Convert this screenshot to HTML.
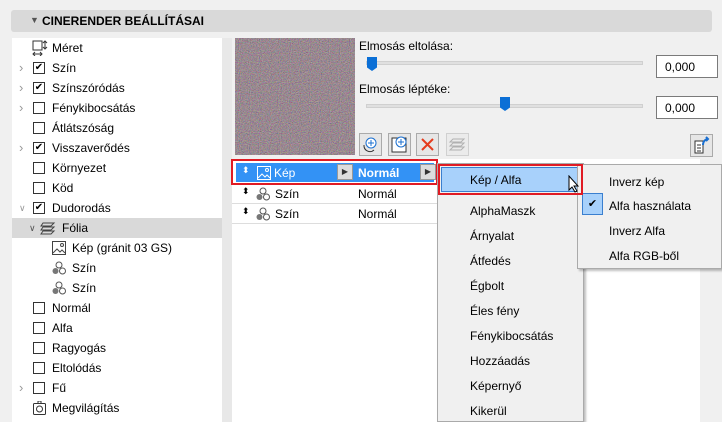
<!DOCTYPE html>
<html><head><meta charset="utf-8"><style>
*{margin:0;padding:0;box-sizing:border-box}
body{width:722px;height:422px;overflow:hidden;background:#f0f0f0;font-family:"Liberation Sans",sans-serif;font-size:12px;color:#000;position:relative}
.a{position:absolute}
.hdr{left:11px;top:10px;width:701px;height:22px;background:#d9d9d9;border-radius:3px}
.hdr span{position:absolute;left:20px;top:4px;font-weight:bold;font-size:12px}
.tree{left:12px;top:38px;width:210px;height:384px;background:#fff}
.row{position:absolute;left:0;width:210px;height:20px;line-height:20px}
.row .t{position:absolute;left:40px}
.cb{position:absolute;left:21px;top:4px;width:12px;height:12px;border:1px solid #333;background:#fff;font-size:10px;line-height:10px;text-align:center}
.ch{position:absolute;left:7px;color:#999;font-size:13px}
.menu{left:437px;top:163px;width:147px;height:259px;background:#f0f0f0;border:1px solid #aaa;box-shadow:2px 2px 2px rgba(0,0,0,.25)}
.mi{position:absolute;left:32px}
.sub{left:577px;top:164px;width:145px;height:105px;background:#f0f0f0;border:1px solid #aaa;box-shadow:2px 2px 2px rgba(0,0,0,.25)}
.btn{position:absolute;top:133px;width:23px;height:23px;border:1px solid #aaa;background:#e6e6e6}
.inp{position:absolute;left:656px;width:62px;height:23px;background:#fff;border:1px solid #7a7a7a;padding:4px 0 0 8px}
.track{position:absolute;left:366px;width:277px;height:4px;background:#e0e0e0;border:1px solid #d0d0d0}
.thumb{position:absolute;width:10px;height:14px;background:#0b6fd6;clip-path:polygon(0 0,100% 0,100% 75%,50% 100%,0 75%)}
</style></head><body>
<div class="a hdr"><span style="left:19px;top:5px;font-size:9px;color:#555">▼</span><span style="left:31px">CINERENDER BEÁLLÍTÁSAI</span></div>
<div class="a tree">
 <div class="row" style="top:0"><svg class="a" style="left:20px;top:2px" width="16" height="16"><rect x="1" y="1" width="9" height="9" fill="none" stroke="#333"/><path d="M13 1v8M11 3l2-2 2 2M11 7l2 2 2-2M1 14h9M3 12l-2 2 2 2M8 12l2 2-2 2" stroke="#333" fill="none"/></svg><span class="t">Méret</span></div>
 <div class="row" style="top:20px"><span class="ch">›</span><div class="cb">✔</div><span class="t">Szín</span></div>
 <div class="row" style="top:40px"><span class="ch">›</span><div class="cb">✔</div><span class="t">Színszóródás</span></div>
 <div class="row" style="top:60px"><span class="ch">›</span><div class="cb"></div><span class="t">Fénykibocsátás</span></div>
 <div class="row" style="top:80px"><div class="cb"></div><span class="t">Átlátszóság</span></div>
 <div class="row" style="top:100px"><span class="ch">›</span><div class="cb">✔</div><span class="t">Visszaverődés</span></div>
 <div class="row" style="top:120px"><div class="cb"></div><span class="t">Környezet</span></div>
 <div class="row" style="top:140px"><div class="cb"></div><span class="t">Köd</span></div>
 <div class="row" style="top:160px"><span class="ch" style="font-size:9px">∨</span><div class="cb">✔</div><span class="t">Dudorodás</span></div>
 <div class="row" style="top:180px;background:#d9d9d9"><span class="ch" style="left:17px;color:#555;font-size:9px">∨</span><svg class="a" style="left:28px;top:3px" width="16" height="14"><path d="M3 2h11l-3 3H1zM3 6h11l-3 3H1zM3 10h11l-3 3H1z" fill="none" stroke="#444"/></svg><span class="t" style="left:50px">Fólia</span></div>
 <div class="row" style="top:200px"><svg class="a" style="left:40px;top:3px" width="14" height="14"><rect x="0.5" y="0.5" width="13" height="13" fill="#fff" stroke="#444"/><path d="M1 12l4-4 3 3 2-2 3 3" fill="none" stroke="#444"/><circle cx="10" cy="4" r="1.5" fill="none" stroke="#444"/></svg><span class="t" style="left:60px">Kép (gránit 03 GS)</span></div>
 <div class="row" style="top:220px"><svg class="a" style="left:40px;top:3px" width="14" height="14"><circle cx="7" cy="4" r="3" fill="none" stroke="#555"/><circle cx="3.5" cy="10" r="3" fill="#777"/><circle cx="10.5" cy="10" r="3" fill="none" stroke="#555"/></svg><span class="t" style="left:60px">Szín</span></div>
 <div class="row" style="top:240px"><svg class="a" style="left:40px;top:3px" width="14" height="14"><circle cx="7" cy="4" r="3" fill="none" stroke="#555"/><circle cx="3.5" cy="10" r="3" fill="#777"/><circle cx="10.5" cy="10" r="3" fill="none" stroke="#555"/></svg><span class="t" style="left:60px">Szín</span></div>
 <div class="row" style="top:260px"><div class="cb"></div><span class="t">Normál</span></div>
 <div class="row" style="top:280px"><div class="cb"></div><span class="t">Alfa</span></div>
 <div class="row" style="top:300px"><div class="cb"></div><span class="t">Ragyogás</span></div>
 <div class="row" style="top:320px"><div class="cb"></div><span class="t">Eltolódás</span></div>
 <div class="row" style="top:340px"><span class="ch">›</span><div class="cb"></div><span class="t">Fű</span></div>
 <div class="row" style="top:360px"><svg class="a" style="left:21px;top:3px" width="13" height="14"><rect x="0.5" y="2.5" width="12" height="11" rx="1" fill="none" stroke="#333"/><circle cx="6.5" cy="8" r="3" fill="none" stroke="#333"/><path d="M5 2V0h3v2" stroke="#333" fill="none"/></svg><span class="t">Megvilágítás</span></div>
</div>
<div class="a" style="left:222px;top:38px;width:10px;height:384px;background:#e8e8e8"></div>
<svg class="a" style="left:235px;top:38px" width="120" height="117"><filter id="g"><feTurbulence type="fractalNoise" baseFrequency="0.9" numOctaves="2" seed="3"/><feColorMatrix values="0.9 0 0 0 -0.05  0 0.75 0 0 -0.05  0 0 0.75 0 0  0 0 0 0 1"/></filter><rect width="120" height="117" fill="#6a5656"/><rect width="120" height="117" filter="url(#g)" opacity="0.75"/></svg>
<div class="a" style="left:359px;top:39px">Elmosás eltolása:</div>
<div class="track" style="top:61px"></div><div class="thumb" style="left:367px;top:57px"></div>
<div class="inp" style="top:55px">0,000</div>
<div class="a" style="left:359px;top:82px">Elmosás léptéke:</div>
<div class="track" style="top:104px"></div><div class="thumb" style="left:500px;top:97px"></div>
<div class="inp" style="top:96px">0,000</div>
<div class="btn" style="left:359px"><svg width="21" height="21"><circle cx="11" cy="9" r="5" fill="#fff" stroke="#1a6fd0"/><path d="M11 6v6M8 9h6" stroke="#1a6fd0"/><path d="M4 11a6 6 0 0 0 10 5" stroke="#333" fill="none"/></svg></div>
<div class="btn" style="left:388px"><svg width="21" height="21"><rect x="3" y="4" width="14" height="14" fill="#fff" stroke="#333"/><circle cx="12" cy="8" r="5" fill="#fff" stroke="#1a6fd0"/><path d="M12 5v6M9 8h6" stroke="#1a6fd0"/></svg></div>
<div class="btn" style="left:416px"><svg width="21" height="21"><path d="M5 5l11 11M16 5L5 16" stroke="#e53b1c" stroke-width="2"/></svg></div>
<div class="btn" style="left:446px;opacity:.45"><svg width="21" height="21"><path d="M6 5h11l-3 3H3zM6 9h11l-3 3H3zM6 13h11l-3 3H3z" fill="none" stroke="#666"/></svg></div>
<div class="btn" style="left:690px;top:134px"><svg width="21" height="21"><path d="M4 6h8v12H4z" fill="#fff" stroke="#333"/><path d="M6 10h4M6 13h4M6 16h4" stroke="#333"/><path d="M12 10c0-4 3-6 5-6M15 2l2 2-2 2" stroke="#1a6fd0" stroke-width="2" fill="none"/></svg></div>
<div class="a" style="left:232px;top:159px;width:470px;height:263px;background:#fff"></div>
<div class="a" style="left:232px;top:184px;width:208px;height:1px;background:#ddd"></div>
<div class="a" style="left:232px;top:203px;width:208px;height:1px;background:#ddd"></div>
<div class="a" style="left:232px;top:223px;width:208px;height:1px;background:#ddd"></div>
<div class="a" style="left:700px;top:159px;width:22px;height:263px;background:#f0f0f0"></div>
<div class="a" style="left:236px;top:163px;width:198px;height:19px;background:#3392f5;color:#fff">
 <span class="a" style="left:6px;top:2px;font-size:9px">⬍</span>
 <svg class="a" style="left:21px;top:3px" width="14" height="14"><rect x="0.5" y="0.5" width="13" height="13" fill="#3392f5" stroke="#fff"/><path d="M1 12l4-4 3 3 2-2 3 3" fill="none" stroke="#fff"/><circle cx="10" cy="4" r="1.5" fill="none" stroke="#fff"/></svg>
 <span class="a" style="left:38px;top:3px">Kép</span>
 <div class="a" style="left:101px;top:1px;width:16px;height:16px;background:#ddd;border:1px solid #999;color:#333;font-size:8px;text-align:center;line-height:14px">▶</div>
 <span class="a" style="left:122px;top:3px;font-weight:bold">Normál</span>
 <div class="a" style="left:184px;top:1px;width:16px;height:16px;background:#ddd;border:1px solid #999;color:#333;font-size:8px;text-align:center;line-height:14px">▶</div>
</div>
<div class="a" style="left:231px;top:159px;width:207px;height:26px;border:2px solid #e01b24"></div>
<div class="a" style="left:242px;top:186px;font-size:9px">⬍</div>
<svg class="a" style="left:256px;top:187px" width="14" height="14"><circle cx="7" cy="4" r="3" fill="none" stroke="#555"/><circle cx="3.5" cy="10" r="3" fill="#777"/><circle cx="10.5" cy="10" r="3" fill="none" stroke="#555"/></svg>
<div class="a" style="left:275px;top:187px">Szín</div><div class="a" style="left:358px;top:187px">Normál</div>
<div class="a" style="left:242px;top:206px;font-size:9px">⬍</div>
<svg class="a" style="left:256px;top:207px" width="14" height="14"><circle cx="7" cy="4" r="3" fill="none" stroke="#555"/><circle cx="3.5" cy="10" r="3" fill="#777"/><circle cx="10.5" cy="10" r="3" fill="none" stroke="#555"/></svg>
<div class="a" style="left:275px;top:207px">Szín</div><div class="a" style="left:358px;top:207px">Normál</div>
<div class="a menu">
 <div class="a" style="left:3px;top:3px;width:137px;height:25px;background:#a8d1fb;border:1px solid #3a7fcf"></div>
 <span class="mi" style="top:9px">Kép / Alfa</span>
 <span class="mi" style="top:40px">AlphaMaszk</span>
 <span class="mi" style="top:65px">Árnyalat</span>
 <span class="mi" style="top:90px">Átfedés</span>
 <span class="mi" style="top:115px">Égbolt</span>
 <span class="mi" style="top:140px">Éles fény</span>
 <span class="mi" style="top:165px">Fénykibocsátás</span>
 <span class="mi" style="top:190px">Hozzáadás</span>
 <span class="mi" style="top:215px">Képernyő</span>
 <span class="mi" style="top:240px">Kikerül</span>
</div>
<div class="a sub">
 <div class="a" style="left:4px;top:28px;width:21px;height:22px;background:#a8d1fb;border:1px solid #3a7fcf;text-align:center;line-height:20px;font-size:11px">✔</div>
 <span class="a" style="left:31px;top:10px">Inverz kép</span>
 <span class="a" style="left:31px;top:34px">Alfa használata</span>
 <span class="a" style="left:31px;top:59px">Inverz Alfa</span>
 <span class="a" style="left:31px;top:84px">Alfa RGB-ből</span>
</div>
<div class="a" style="left:438px;top:164px;width:145px;height:31px;border:2px solid #e01b24"></div>
<svg class="a" style="left:568px;top:175px" width="12" height="18"><path d="M1 1v14l3-3 3 5 2-1-3-5h4z" fill="#fff" stroke="#000"/></svg>
</body></html>
